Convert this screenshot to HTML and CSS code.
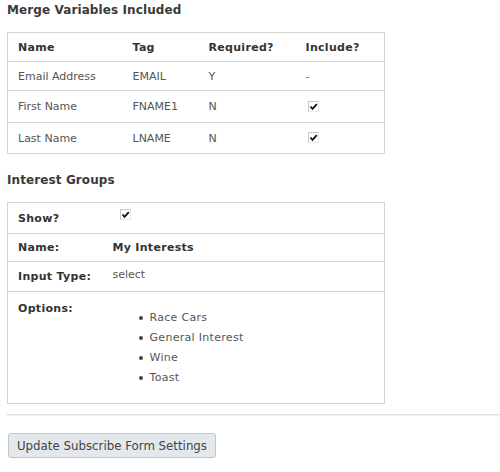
FILE: index.html
```html
<!DOCTYPE html>
<html>
<head>
<meta charset="utf-8">
<link rel="stylesheet" href="styles.css">
</head>
<body>
<div class="page">
  <h3 class="section-title first">Merge Variables Included</h3>
  <table class="vars">
    <colgroup>
      <col class="c-name"><col class="c-tag"><col class="c-req"><col class="c-inc">
    </colgroup>
    <thead>
      <tr class="head-row"><th>Name</th><th>Tag</th><th>Required?</th><th>Include?</th></tr>
    </thead>
    <tbody>
      <tr class="r1"><td>Email Address</td><td>EMAIL</td><td>Y</td><td class="dash">-</td></tr>
      <tr class="r2"><td>First Name</td><td>FNAME1</td><td>N</td><td><span class="cb"><svg width="11" height="11" viewBox="0 0 11 11"><path d="M2.5 5.5 L4.5 7.8 L8.8 3.2" fill="none" stroke="#111" stroke-width="1.8"/></svg></span></td></tr>
      <tr class="r3"><td>Last Name</td><td>LNAME</td><td>N</td><td><span class="cb"><svg width="11" height="11" viewBox="0 0 11 11"><path d="M2.5 5.5 L4.5 7.8 L8.8 3.2" fill="none" stroke="#111" stroke-width="1.8"/></svg></span></td></tr>
    </tbody>
  </table>

  <h3 class="section-title second">Interest Groups</h3>
  <table class="groups">
    <colgroup><col class="g-label"><col class="g-val"></colgroup>
    <tr class="g-show"><th>Show?</th><td><span class="cb cb-show"><svg width="11" height="11" viewBox="0 0 11 11"><path d="M2.5 5.5 L4.5 7.8 L8.8 3.2" fill="none" stroke="#111" stroke-width="1.8"/></svg></span></td></tr>
    <tr class="g-name"><th>Name:</th><td class="strong">My Interests</td></tr>
    <tr class="g-type"><th>Input Type:</th><td class="raised">select</td></tr>
    <tr class="g-opts"><th>Options:</th><td>
      <ul class="opts">
        <li>Race Cars</li>
        <li>General Interest</li>
        <li>Wine</li>
        <li>Toast</li>
      </ul>
    </td></tr>
  </table>

  <div class="rule"></div>
  <button class="submit" type="button">Update Subscribe Form Settings</button>
</div>
</body>
</html>
```

FILE: styles.css
```css
html, body {
  margin: 0;
  padding: 0;
  background: #fff;
}
body {
  font-family: "DejaVu Sans", Verdana, sans-serif;
  font-size: 11px;
  color: #555;
}
.page {
  padding: 0 0 0 7px;
}
.section-title {
  margin: 0;
  font-size: 12px;
  font-weight: bold;
  color: #3a3a3a;
  letter-spacing: 0.1px;
  line-height: 16px;
}
.section-title.first {
  padding-top: 2px;
  height: 30px;
}
.section-title.second {
  padding-top: 18px;
  height: 30px;
}
table {
  border-collapse: collapse;
  width: 377px;
  border: 1px solid #d4d4d4;
  table-layout: fixed;
}
th, td {
  text-align: left;
  padding: 0 0 0 10px;
  vertical-align: middle;
}
th {
  font-weight: bold;
  color: #333;
  letter-spacing: 0.3px;
}
tr {
  border-bottom: 1px solid #d4d4d4;
}
.c-name { width: 115px; }
.c-tag { width: 76px; }
.c-req { width: 97px; }
.c-inc { width: 89px; }
.vars .head-row { height: 29px; }
.vars .r1 { height: 29px; }
.vars .r2 { height: 32px; }
.vars .r3 { height: 31px; }
.dash { color: #777; }
.cb {
  display: inline-block;
  width: 11px;
  height: 11px;
  box-sizing: border-box;
  border: 1px solid #c8c8c8;
  border-right-color: #e6e6e6;
  border-bottom-color: #e6e6e6;
  position: relative;
  top: 1px;
  margin-left: 2px;
}
.cb svg {
  position: absolute;
  left: -1px;
  top: -1px;
}
.g-label { width: 95px; }
.g-val { width: 282px; }
.g-show { height: 31px; }
.g-name { height: 28px; }
.g-type { height: 30px; }
.g-opts { height: 112px; }
.g-opts th, .g-opts td { vertical-align: top; }
.g-opts th { padding-top: 10px; }
.cb-show { margin-left: 7px; top: -2px; }
.strong { font-weight: bold; color: #333; letter-spacing: 0.3px; }
.raised { position: relative; top: -2px; }
.opts {
  margin: 16px 0 0 0;
  padding: 0 0 0 37px;
  list-style: none;
}
.opts li {
  position: relative;
  line-height: 20px;
  letter-spacing: 0.3px;
}
.opts li::before {
  content: "";
  position: absolute;
  left: -11px;
  top: 8px;
  width: 4px;
  height: 4px;
  border-radius: 50%;
  background: #444;
}
.rule {
  margin-top: 10px;
  height: 1px;
  border-top: 1px solid #e2e2e2;
  background: #efefef;
}
.submit {
  margin: 17px 0 0 1px;
  height: 25px;
  width: 208px;
  padding: 0;
  font-family: "DejaVu Sans", Verdana, sans-serif;
  font-size: 11.8px;
  color: #444;
  background: #e3e8ec;
  border: 1px solid #bfc6cc;
  border-radius: 3px;
}
```
